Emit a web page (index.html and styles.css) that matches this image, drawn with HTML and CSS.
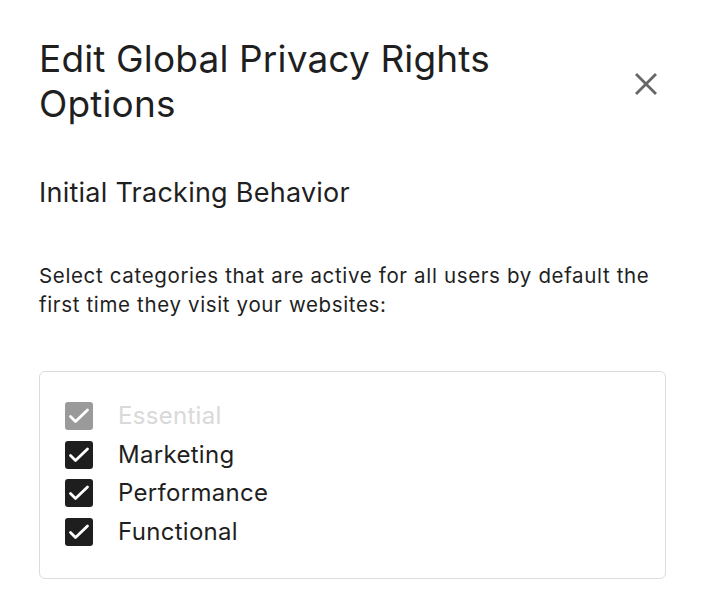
FILE: index.html
```html
<!DOCTYPE html>
<html lang="en">
<head>
<meta charset="utf-8">
<title>Edit Global Privacy Rights Options</title>
<link rel="stylesheet" href="styles.css">
</head>
<body>
<div class="dialog">
  <div class="header">
    <h1 class="title">Edit Global Privacy Rights Options</h1>
    <button class="close" aria-label="Close">
      <svg width="24" height="24" viewBox="0 0 24 24"><path d="M2 2L22 22M22 2L2 22" stroke="#666" stroke-width="2.8" stroke-linecap="butt" fill="none"/></svg>
    </button>
  </div>
  <h2 class="subtitle">Initial Tracking Behavior</h2>
  <p class="desc">Select categories that are active for all users by default the first time they visit your websites:</p>
  <div class="box">
    <label class="row disabled"><span class="check"><svg viewBox="0 0 28 28"><path d="M5.5 14.5l5 5L22.5 8" stroke="#fff" stroke-width="2.8" fill="none" stroke-linecap="round" stroke-linejoin="round"/></svg></span><span class="label">Essential</span></label>
    <label class="row"><span class="check"><svg viewBox="0 0 28 28"><path d="M5.5 14.5l5 5L22.5 8" stroke="#fff" stroke-width="2.8" fill="none" stroke-linecap="round" stroke-linejoin="round"/></svg></span><span class="label">Marketing</span></label>
    <label class="row"><span class="check"><svg viewBox="0 0 28 28"><path d="M5.5 14.5l5 5L22.5 8" stroke="#fff" stroke-width="2.8" fill="none" stroke-linecap="round" stroke-linejoin="round"/></svg></span><span class="label">Performance</span></label>
    <label class="row"><span class="check"><svg viewBox="0 0 28 28"><path d="M5.5 14.5l5 5L22.5 8" stroke="#fff" stroke-width="2.8" fill="none" stroke-linecap="round" stroke-linejoin="round"/></svg></span><span class="label">Functional</span></label>
  </div>
</div>
</body>
</html>
```

FILE: styles.css
```css
html, body {
  margin: 0;
  padding: 0;
  background: #fff;
}
body {
  font-family: Inter, "Noto Sans", sans-serif;
  color: #1f1f1f;
}
.dialog {
  padding: 36px 38px 0 39px;
}
.header {
  display: flex;
  align-items: flex-start;
  justify-content: space-between;
}
.title {
  margin: 0;
  width: 480px;
  font-size: 37px;
  font-weight: 400;
  line-height: 45px;
  letter-spacing: 0.15px;
}
.close {
  background: none;
  border: 0;
  padding: 0;
  margin: 36px 8px 0 0;
  width: 24px;
  height: 24px;
  cursor: pointer;
}
.close svg {
  display: block;
}
.subtitle {
  margin: 50px 0 0;
  font-size: 27px;
  font-weight: 400;
  line-height: 34px;
  letter-spacing: 0.25px;
}
.desc {
  margin: 51px 0 0;
  font-size: 20.5px;
  line-height: 29px;
  width: 627px;
  letter-spacing: 0.65px;
}
.box {
  margin-top: 52px;
  border: 1px solid #dcdcdc;
  border-radius: 6px;
  padding: 30px 25px 32px;
  display: flex;
  flex-direction: column;
  gap: 10.5px;
}
.row {
  display: flex;
  align-items: center;
  gap: 25px;
  height: 28px;
}
.check {
  width: 28px;
  height: 28px;
  border-radius: 3px;
  background: #1e1e1e;
  display: block;
  flex: none;
}
.check svg {
  display: block;
  width: 28px;
  height: 28px;
}
.label {
  font-size: 24px;
  line-height: 28px;
  letter-spacing: 0.3px;
}
.disabled .check {
  background: #9a9a9a;
}
.disabled .label {
  color: #d9d9d9;
}
```
